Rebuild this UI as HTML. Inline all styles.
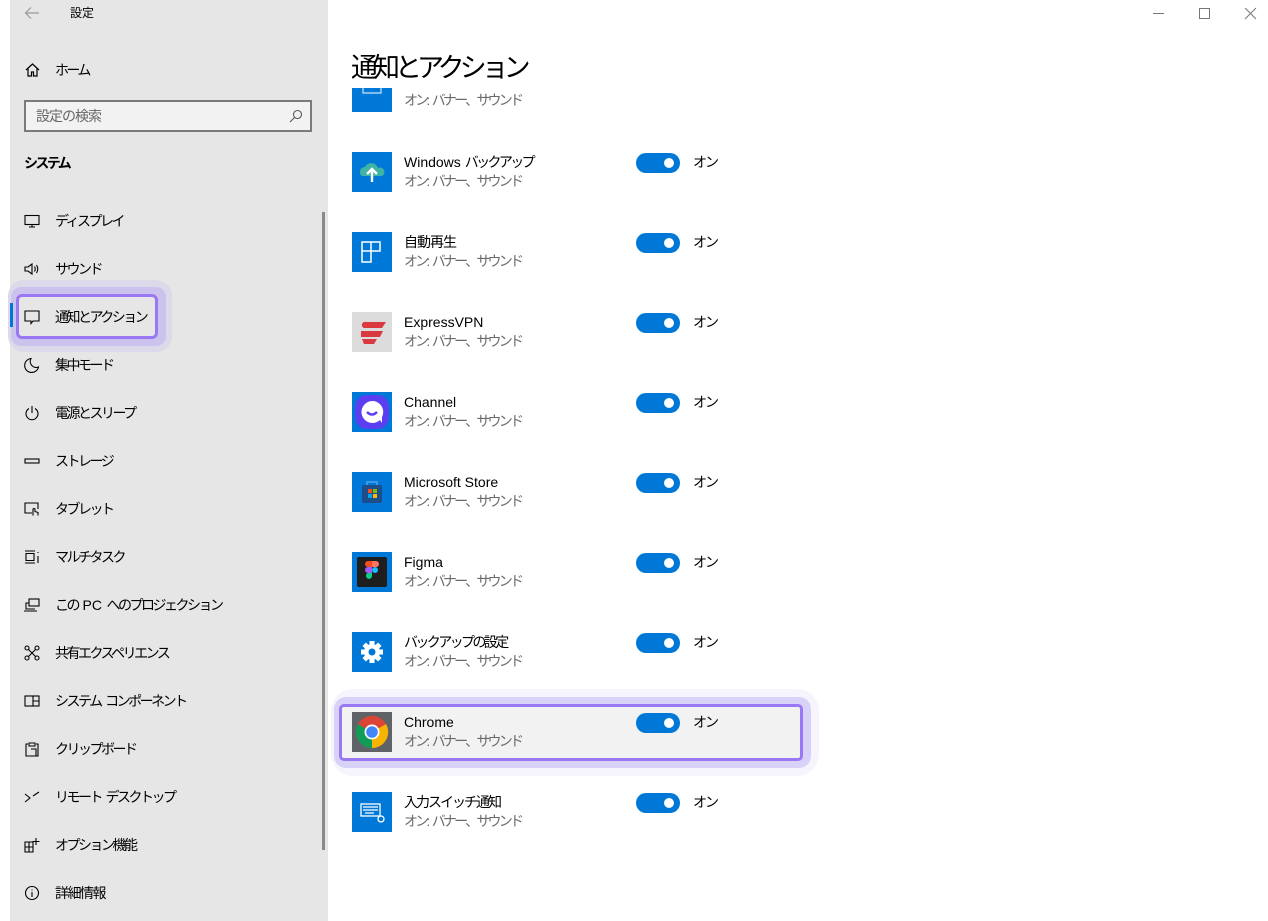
<!DOCTYPE html>
<html><head><meta charset="utf-8"><style>
*{margin:0;padding:0;box-sizing:border-box}
body{width:1268px;height:921px;position:relative;background:#fff;font-family:"Liberation Sans","Noto Sans CJK JP",sans-serif;overflow:hidden;color:#000}
.abs{position:absolute}
.j{letter-spacing:-2.6px}
#side{left:10px;top:0;width:318px;height:921px;background:#e6e6e6}
.si{position:absolute;left:24px;width:300px;height:24px;font-size:14px;line-height:24px}
.si svg{position:absolute;left:0;top:4px;width:16px;height:16px;fill:none;stroke:#000;stroke-width:1.1}
.si span{position:absolute;left:31px;top:0;letter-spacing:-2.5px;white-space:nowrap}
.row{position:absolute;left:352px;width:420px;height:40px}
.ic{position:absolute;left:0;top:0;width:40px;height:40px;background:#0078d7}
.nm{position:absolute;left:52px;top:0;font-size:14px;line-height:20px;white-space:nowrap}
.sb{position:absolute;left:52px;top:19px;font-size:14px;line-height:20px;color:#6a6a6a;letter-spacing:-2.8px;white-space:nowrap}
.tg{position:absolute;left:284px;top:1px;width:44px;height:20px;border-radius:10px;background:#0078d7}
.tg:after{content:"";position:absolute;right:6px;top:5px;width:10px;height:10px;border-radius:50%;background:#fff}
.on{position:absolute;left:341px;top:0;font-size:14px;line-height:20px;letter-spacing:-2px}
</style></head><body>
<div class="abs" id="side"></div>
<svg class="abs" style="left:24px;top:6px" width="16" height="14"><path d="M15 7H2M7 1.5 1.5 7 7 12.5" fill="none" stroke="#999" stroke-width="1.2"/></svg>
<div class="abs" style="left:70px;top:5px;font-size:12px;line-height:16px">設定</div>
<svg class="abs" style="left:1150px;top:6px" width="110" height="16" fill="none" stroke="#777" stroke-width="1"><path d="M3 7.5h11"/><rect x="49.5" y="2.5" width="10" height="10"/><path d="M95 2l11 11M106 2 95 13"/></svg>

<svg class="abs" style="left:24px;top:62px" width="17" height="16" fill="none" stroke="#000" stroke-width="1.2"><path d="M2 8 8.5 2 15 8M4 6.5V14h3.5V10h2v4H13V6.5"/></svg>
<div class="abs j" style="left:55px;top:59px;font-size:14px;line-height:22px">ホーム</div>
<div class="abs" style="left:24px;top:100px;width:288px;height:32px;border:2px solid #7a7a7a;background:#f2f2f2"></div>
<div class="abs" style="left:36px;top:106px;font-size:14px;line-height:20px;color:#666;letter-spacing:-1px">設定の検索</div>
<svg class="abs" style="left:289px;top:109px" width="14" height="14" fill="none" stroke="#555" stroke-width="1.1"><circle cx="8.5" cy="5.5" r="4"/><path d="M5.5 8.5 1 13"/></svg>
<div class="abs j" style="left:24px;top:152px;font-size:14px;font-weight:bold;line-height:22px">システム</div>
<div class="abs" style="left:322px;top:212px;width:3px;height:638px;background:#8a8a8a"></div>

<div class="abs" style="left:8px;top:280px;width:164px;height:72px;border-radius:16px;background:#dcdaea"></div>
<div class="abs" style="left:11px;top:287px;width:155px;height:59px;border-radius:10px;background:#cbc3ee"></div>
<div class="abs" style="left:10px;top:303px;width:3px;height:24px;background:#0078d7"></div>
<div class="abs" style="left:16px;top:294px;width:142px;height:45px;border-radius:6px;border:3px solid #9a78f4;background:#e6e6e6"></div>

<div class="si" style="top:209px"><svg><rect x="1" y="2.5" width="14" height="9"/><path d="M8 11.5v2.5M5 14h6"/></svg><span>ディスプレイ</span></div>
<div class="si" style="top:257px"><svg><path d="M1 6h3l4-3v10l-4-3H1z"/><path d="M10.5 5.5q1.5 2.5 0 5M12.5 4q2.5 4 0 8"/></svg><span>サウンド</span></div>
<div class="si" style="top:305px"><svg><path d="M1 2h14v10H9l-2 2.5V12H1z"/></svg><span>通知とアクション</span></div>
<div class="si" style="top:353px"><svg><path d="M7 1.5A7 7 0 1 0 14.5 10 6 6 0 0 1 7 1.5z"/></svg><span>集中モード</span></div>
<div class="si" style="top:401px"><svg><path d="M5 3.5a6 6 0 1 0 6 0M8 1v7"/></svg><span>電源とスリープ</span></div>
<div class="si" style="top:449px"><svg><rect x="1" y="6" width="14" height="4"/></svg><span>ストレージ</span></div>
<div class="si" style="top:497px"><svg><path d="M8 12H1V2h13v6"/><path d="M9 14.5V8.5a1 1 0 0 1 2 0v2l3 1v3"/></svg><span>タブレット</span></div>
<div class="si" style="top:545px"><svg><path d="M1 2h10M1 14h10M2 4.5h8v7H2z"/><path d="M14 3v1M14 7v7"/></svg><span>マルチタスク</span></div>
<div class="si" style="top:593px"><svg><rect x="5" y="2" width="10" height="7"/><path d="M5 6H2v6h9M0 14h13"/></svg><span>この&ensp;<b style="font-weight:normal;letter-spacing:0">PC</b>&ensp;へのプロジェクション</span></div>
<div class="si" style="top:641px"><svg><circle cx="3" cy="3" r="2"/><circle cx="13" cy="3" r="2"/><circle cx="3" cy="13" r="2"/><circle cx="13" cy="13" r="2"/><path d="M4.5 4.5l7 7M11.5 4.5l-7 7"/></svg><span>共有エクスペリエンス</span></div>
<div class="si" style="top:689px"><svg><rect x="1" y="3" width="14" height="10"/><path d="M9 3v10M9 8h6"/></svg><span>システム&ensp;コンポーネント</span></div>
<div class="si" style="top:737px"><svg><path d="M4 3H2v12h12V3h-2M5 2h6v3H5z"/><path d="M7 8h5v7"/></svg><span>クリップボード</span></div>
<div class="si" style="top:785px"><svg><path d="M1 5l5 4-5 4M15 3l-6 4"/></svg><span>リモート&ensp;デスクトップ</span></div>
<div class="si" style="top:833px"><svg><path d="M1 5h8v10H1zM1 10h8M5 5v10M12 1v7M8.5 4.5h7"/></svg><span>オプション機能</span></div>
<div class="si" style="top:881px"><svg><circle cx="8" cy="8" r="6.5"/><path d="M8 7v5M8 4.5v1"/></svg><span style="letter-spacing:-1.5px">詳細情報</span></div>

<div class="abs" style="left:351px;top:50px;font-size:27px;line-height:36px;letter-spacing:-5px">通知とアクション</div>
<div class="abs" style="left:352px;top:88px;width:40px;height:24px;background:#0078d7"></div>
<svg class="abs" style="left:362px;top:88px" width="20" height="8"><path d="M1 0v5h18V0" fill="none" stroke="#cfe4f7" stroke-width="1.2"/></svg>
<div class="abs" style="left:404px;top:90px;font-size:14px;line-height:20px;color:#6a6a6a;letter-spacing:-2.8px">オン:&ensp;バナー、サウンド</div>

<div class="row" style="top:152px"><div class="ic"><svg width="40" height="40"><path d="M10 24a5 5 0 0 1 3-9 7 7 0 0 1 13 1 4 4 0 0 1 4 8z" fill="#3fb3a4"/><path d="M20 30V18M15 22l5-5 5 5" stroke="#fff" stroke-width="2.4" fill="none"/></svg></div><div class="nm">Windows <span class="j">バックアップ</span></div><div class="sb">オン:&ensp;バナー、サウンド</div><div class="tg"></div><div class="on">オン</div></div>
<div class="row" style="top:232px"><div class="ic"><svg width="40" height="40" fill="none" stroke="#fff" stroke-width="1.5"><path d="M10 10h9v9h-9zM19 10h9v9h-9zM10 19h9v11h-9z"/></svg></div><div class="nm" style="letter-spacing:-1px">自動再生</div><div class="sb">オン:&ensp;バナー、サウンド</div><div class="tg"></div><div class="on">オン</div></div>
<div class="row" style="top:312px"><div class="ic" style="background:#dcdcdc"><svg width="40" height="40"><path d="M14 10h20l-4 6H12a3 3 0 0 1 2-6zM9 19h22l-3 6H9zM10 27h15l-3 5h-10z" fill="#da3940"/></svg></div><div class="nm">ExpressVPN</div><div class="sb">オン:&ensp;バナー、サウンド</div><div class="tg"></div><div class="on">オン</div></div>
<div class="row" style="top:392px"><div class="ic"><svg width="40" height="40"><rect x="3" y="3" width="34" height="34" rx="12" fill="#5b3df2"/><path d="M20 9a11 11 0 1 0 8 19l2 3 0-6a11 11 0 0 0-10-16z" fill="#fff"/><path d="M15 20q5 5 10 0" stroke="#5b3df2" stroke-width="2.4" fill="none"/></svg></div><div class="nm">Channel</div><div class="sb">オン:&ensp;バナー、サウンド</div><div class="tg"></div><div class="on">オン</div></div>
<div class="row" style="top:472px"><div class="ic"><svg width="40" height="40"><rect x="10" y="13" width="20" height="18" rx="2" fill="#1b4e8a"/><path d="M15 13v-3h10v3" stroke="#4fa3e6" fill="none" stroke-width="1.5"/><rect x="16" y="17" width="4" height="4" fill="#f25022"/><rect x="21" y="17" width="4" height="4" fill="#7fba00"/><rect x="16" y="22" width="4" height="4" fill="#00a4ef"/><rect x="21" y="22" width="4" height="4" fill="#ffb900"/></svg></div><div class="nm">Microsoft Store</div><div class="sb">オン:&ensp;バナー、サウンド</div><div class="tg"></div><div class="on">オン</div></div>
<div class="row" style="top:552px"><div class="ic"><svg width="40" height="40"><rect x="5" y="5" width="30" height="30" rx="2" fill="#1e1e1e"/><path d="M16 9h4v6h-4a3 3 0 0 1 0-6z" fill="#f24e1e"/><path d="M20 9h4a3 3 0 0 1 0 6h-4z" fill="#ff7262"/><path d="M16 15h4v6h-4a3 3 0 0 1 0-6z" fill="#a259ff"/><circle cx="23" cy="18" r="3" fill="#1abcfe"/><path d="M16 21h4v3a3 3 0 1 1-4-3z" fill="#0acf83"/></svg></div><div class="nm">Figma</div><div class="sb">オン:&ensp;バナー、サウンド</div><div class="tg"></div><div class="on">オン</div></div>
<div class="row" style="top:632px"><div class="ic"><svg width="40" height="40"><g transform="translate(20 20)" fill="#fff"><circle r="8"/><g id="t"><rect x="-2.5" y="-11" width="5" height="5"/></g><use href="#t" transform="rotate(45)"/><use href="#t" transform="rotate(90)"/><use href="#t" transform="rotate(135)"/><use href="#t" transform="rotate(180)"/><use href="#t" transform="rotate(225)"/><use href="#t" transform="rotate(270)"/><use href="#t" transform="rotate(315)"/><circle r="3.5" fill="#0078d7"/></g></svg></div><div class="nm j">バックアップの設定</div><div class="sb">オン:&ensp;バナー、サウンド</div><div class="tg"></div><div class="on">オン</div></div>

<div class="abs" style="left:331px;top:689px;width:488px;height:87px;border-radius:22px;background:#f6f5fd"></div>
<div class="abs" style="left:334px;top:697px;width:477px;height:71px;border-radius:12px;background:#d8d2f8"></div>
<div class="abs" style="left:339px;top:704px;width:464px;height:57px;border-radius:5px;border:3px solid #9a78f4;background:#f2f2f2"></div>
<div class="row" style="top:712px"><div class="ic" style="background:#5f6368"><svg width="40" height="40"><circle cx="20" cy="20" r="16" fill="#db4437"/><path d="M20 20 6.1 12A16 16 0 0 0 20 36z" fill="#0f9d58"/><path d="M20 20 20 36A16 16 0 0 0 34 12z" fill="#f4b400"/><path d="M20 20 6 12 A16 16 0 0 1 20 4 16 16 0 0 1 34 12z" fill="#db4437"/><circle cx="20" cy="20" r="7.5" fill="#fff"/><circle cx="20" cy="20" r="5.8" fill="#4285f4"/></svg></div><div class="nm">Chrome</div><div class="sb">オン:&ensp;バナー、サウンド</div><div class="tg"></div><div class="on">オン</div></div>
<div class="row" style="top:792px"><div class="ic"><svg width="40" height="40" fill="none" stroke="#fff" stroke-width="1.3"><rect x="9" y="12" width="19" height="12"/><path d="M11 15h15M11 18h15M13 21h9"/><circle cx="29" cy="27" r="3"/></svg></div><div class="nm" style="letter-spacing:-2px">入力スイッチ通知</div><div class="sb">オン:&ensp;バナー、サウンド</div><div class="tg"></div><div class="on">オン</div></div>
</body></html>
